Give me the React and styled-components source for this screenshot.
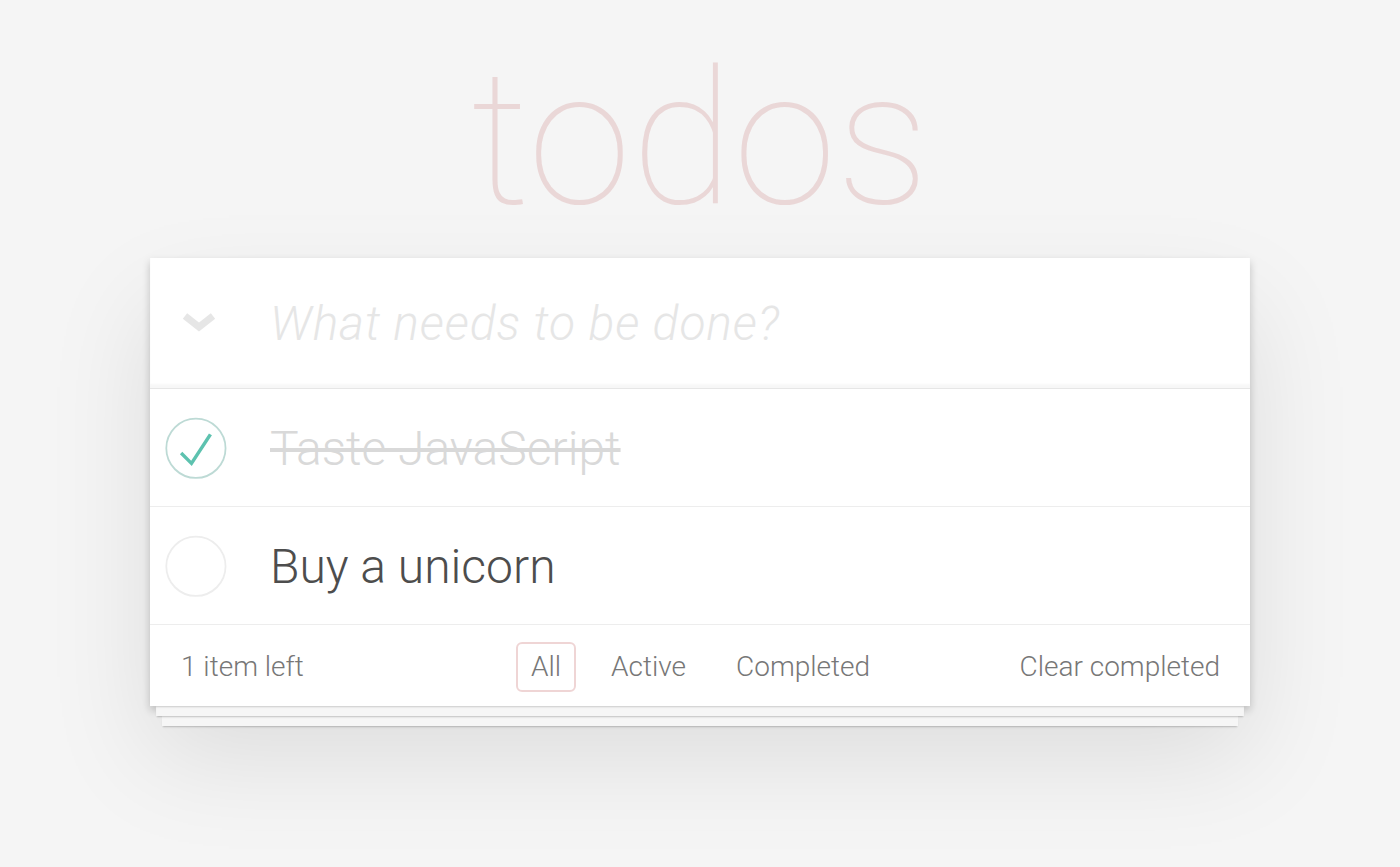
import styled, { createGlobalStyle } from 'styled-components';

const font = "Roboto, 'Liberation Sans', Arial, sans-serif";

const GlobalStyle = createGlobalStyle`
  html, body {
    margin: 0;
    padding: 0;
    min-height: 100%;
    background: #f5f5f5;
    font-family: ${font};
    font-weight: 300;
    color: #4d4d4d;
  }
`;

const Page = styled.div`
  width: 1100px;
  min-height: 100vh;
  margin: 0 auto;
`;

const Title = styled.h1`
  margin: 0 0 23px;
  padding-top: 46px;
  height: 189px;
  text-align: center;
  font-size: 187px;
  line-height: 187px;
  font-weight: 100;
  color: rgba(175, 47, 47, 0.15);
`;

const Stack = styled.div`
  display: flex;
  flex-direction: column;
  isolation: isolate;
`;

const Card = styled.section`
  position: relative;
  z-index: 1;
  background: #fff;
  box-shadow: 0 4px 8px 0 rgba(0, 0, 0, 0.2), 0 50px 100px 0 rgba(0, 0, 0, 0.1);
`;

const Header = styled.header`
  display: flex;
  align-items: center;
  height: 130px;
  border-bottom: 1px solid #e6e6e6;
  box-shadow: inset 0 -4px 2px rgba(0, 0, 0, 0.03);
`;

const ToggleAll = styled.div`
  width: 120px;
  display: flex;
  align-items: center;
  padding: 2px 0 0 32px;
  box-sizing: border-box;
`;

const NewTodo = styled.input`
  flex: 1;
  border: none;
  outline: none;
  background: transparent;
  font-family: ${font};
  font-size: 48px;
  font-weight: 300;
  color: #4d4d4d;
  padding: 0 32px 0 0;

  &::placeholder {
    font-style: italic;
    letter-spacing: 0.9px;
    color: #e6e6e6;
  }
`;

const List = styled.ul`
  list-style: none;
  margin: 0;
  padding: 0;
`;

const Item = styled.li`
  display: flex;
  align-items: center;
  height: 117px;
  border-bottom: 1px solid #ededed;
`;

const Check = styled.div`
  width: 120px;
  display: flex;
  align-items: center;
`;

const Label = styled.span`
  padding-top: 2px;
  font-size: 48px;
  font-weight: 300;
  color: ${p => (p.done ? '#d9d9d9' : '#4d4d4d')};
  text-decoration: ${p => (p.done ? 'line-through' : 'none')};
`;

const Footer = styled.footer`
  display: grid;
  grid-template-columns: 1fr auto 1fr;
  align-items: center;
  height: 81px;
  padding: 2px 30px 0 31px;
  box-sizing: border-box;
  font-size: 28px;
  color: #777;
`;

const Count = styled.span`
  justify-self: start;
`;

const Filters = styled.div`
  display: flex;
  gap: 20px;
`;

const Filter = styled.a`
  display: inline-block;
  padding: 6px 13px;
  line-height: 34px;
  border: 2px solid ${p => (p.selected ? 'rgba(175, 47, 47, 0.2)' : 'transparent')};
  border-radius: 6px;
  color: inherit;
  text-decoration: none;
  cursor: pointer;
`;

const Clear = styled.span`
  justify-self: end;
  cursor: pointer;
`;

const Sheet = styled.div`
  height: 10px;
  margin: 0 ${p => p.inset}px;
  background: #f6f6f6;
  box-shadow: ${p => (p.first ? 'inset 0 2px 2px -1px rgba(0, 0, 0, 0.18), ' : '')}0 2px 2px -1px rgba(0, 0, 0, 0.22);
  position: relative;
  z-index: ${p => p.layer};
`;

const Chevron = () => (
  <svg width="34" height="24" viewBox="0 0 34 24">
    <polyline points="3,4 17,15 31,4" fill="none" stroke="#e6e6e6" strokeWidth="7" />
  </svg>
);

const CheckIcon = ({ done }) => (
  <svg width="80" height="80" viewBox="-10 -18 100 135">
    <circle cx="50" cy="50" r="50" fill="none" stroke={done ? '#bddad5' : '#ededed'} strokeWidth="3" />
    {done && <path fill="#5dc2af" d="M72 25L42 71 27 56l-4 4 20 20 34-52z" />}
  </svg>
);

const todos = [
  { title: 'Taste JavaScript', done: true },
  { title: 'Buy a unicorn', done: false },
];

export default function App() {
  return (
    <Page>
      <GlobalStyle />
      <Title>todos</Title>
      <Stack>
        <Card>
          <Header>
            <ToggleAll>
              <Chevron />
            </ToggleAll>
            <NewTodo placeholder="What needs to be done?" />
          </Header>
          <List>
            {todos.map(t => (
              <Item key={t.title}>
                <Check>
                  <CheckIcon done={t.done} />
                </Check>
                <Label done={t.done}>{t.title}</Label>
              </Item>
            ))}
          </List>
          <Footer>
            <Count>1 item left</Count>
            <Filters>
              <Filter selected>All</Filter>
              <Filter>Active</Filter>
              <Filter>Completed</Filter>
            </Filters>
            <Clear>Clear completed</Clear>
          </Footer>
        </Card>
        <Sheet first inset={6} layer={3} />
        <Sheet inset={12} layer={2} />
      </Stack>
    </Page>
  );
}
